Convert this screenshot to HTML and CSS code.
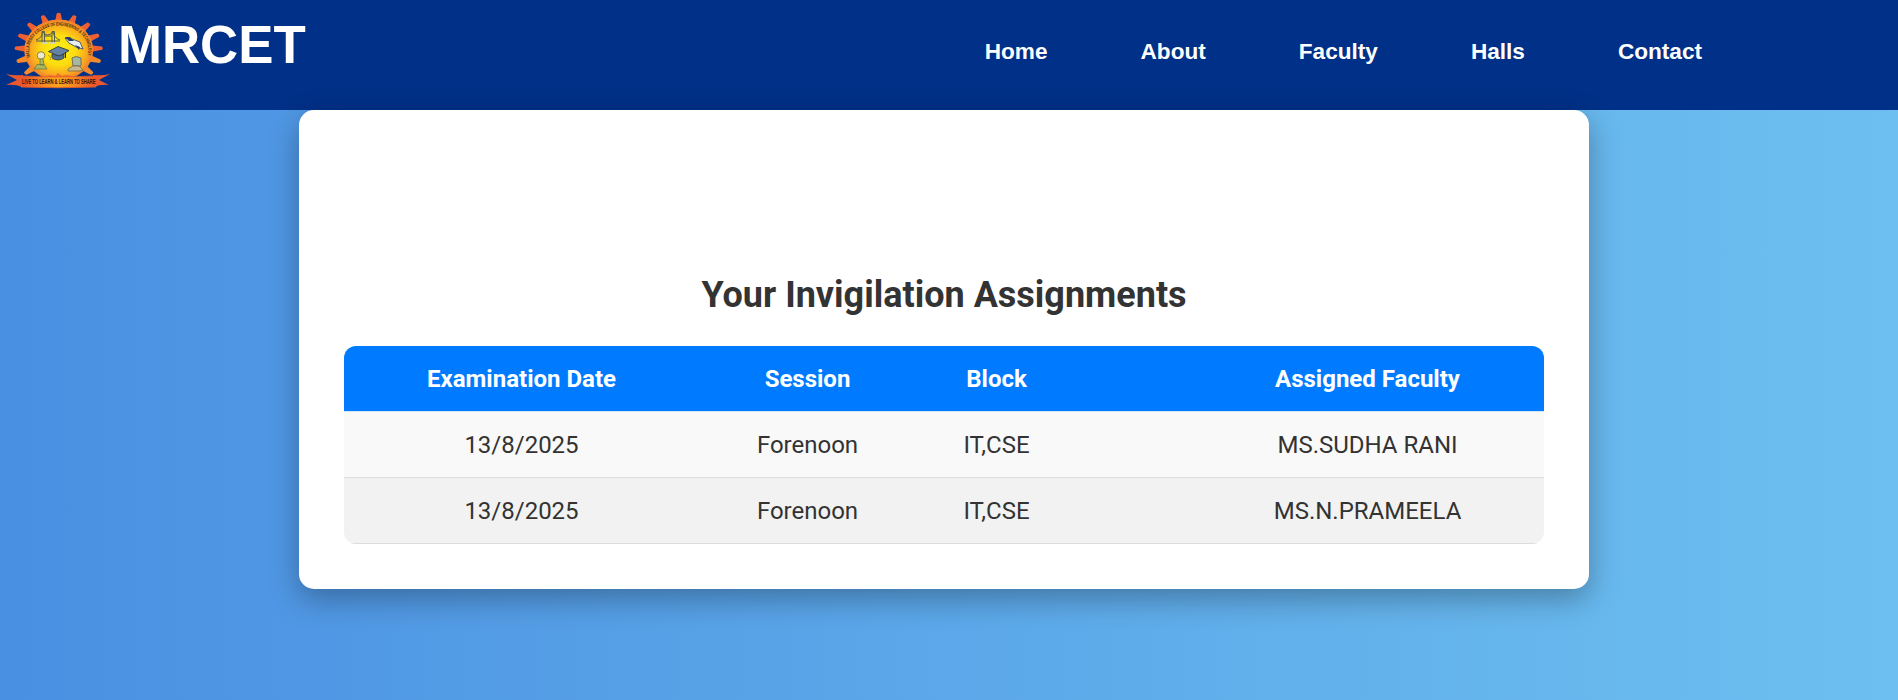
FILE: index.html
```html
<!DOCTYPE html>
<html lang="en">
<head>
<meta charset="utf-8">
<title>MRCET Invigilation</title>
<link rel="stylesheet" href="styles.css">
</head>
<body>
<header class="header">
  <div class="brand">
    <svg class="logo" width="106" height="78" viewBox="0 0 106 78">
      <defs>
        <radialGradient id="sun"><stop offset="0" stop-color="#fff01a"/><stop offset=".5" stop-color="#fcdc0f"/><stop offset=".82" stop-color="#f9a81f"/><stop offset="1" stop-color="#f0802c"/></radialGradient>
        <linearGradient id="band" x1="0" x2="1" y1="0" y2="0"><stop offset="0" stop-color="#e9502a"/><stop offset=".3" stop-color="#f58a22"/><stop offset=".5" stop-color="#fba61c"/><stop offset=".7" stop-color="#f58a22"/><stop offset="1" stop-color="#e9502a"/></linearGradient>
        <path id="arc" d="M25.400 44A29.500 24.500 0 1 1 82 44"/>
        <path id="tooth" d="M-4 -32L-2 -43.500Q0 -45 2 -43.500L4 -32Z"/>
      </defs>
      <g transform="translate(53.700 37) scale(1 .84)">
        <g fill="#ee5f33">
          <use href="#tooth"/>
          <use href="#tooth" transform="rotate(21.500)"/><use href="#tooth" transform="rotate(44)"/><use href="#tooth" transform="rotate(66)"/><use href="#tooth" transform="rotate(87)"/>
          <use href="#tooth" transform="rotate(-21.500)"/><use href="#tooth" transform="rotate(-44)"/><use href="#tooth" transform="rotate(-66)"/><use href="#tooth" transform="rotate(-87)"/>
        </g>
        <g fill="#f58a2c">
          <use href="#tooth" transform="rotate(108)"/><use href="#tooth" transform="rotate(130)"/>
          <use href="#tooth" transform="rotate(-108)"/><use href="#tooth" transform="rotate(-130)"/>
        </g>
      </g>
      <ellipse cx="53.700" cy="37" rx="34.500" ry="30.500" fill="url(#sun)"/>
      <path d="M36 66Q43 60 50 63L53 60L57 63Q65 60 71 66Z" fill="#ef7328"/>
      <text class="ring"><textPath href="#arc" textLength="97" lengthAdjust="spacingAndGlyphs">MALLA REDDY COLLEGE OF ENGINEERING &amp; TECHNOLOGY</textPath></text>
      <g fill="none" stroke="#56604b" stroke-width="1">
        <path d="M31 28H55M31 27Q37 25 38 19Q42 25 48 19Q49 25 55 27M37 30V18.500H39.500V30M47 30V18.500H49.500V30M39 23H47"/>
        <path d="M36 30h6M44 30h7" stroke="#cfd7ca" stroke-width="1.500"/>
      </g>
      <path d="M60 25l7 1 8 3 3 7-7-2-7-4z" fill="#e8edf0" stroke="#253a66" stroke-width=".8"/>
      <path d="M60 24l5 0 4 4-5 0zM70 32l4 5 1-3z" fill="#263b65"/>
      <path d="M43.500 38.500l9.500-5 11 4-9.500 6z" fill="#6582a5" stroke="#222d35" stroke-width=".8"/>
      <path d="M47 41v4q6 4 12 0v-4l-5 2z" fill="#54708f" stroke="#222d35" stroke-width=".7"/>
      <path d="M60.500 39v6" stroke="#222d35"/>
      <circle cx="36" cy="42.500" r="3.800" fill="#efeacb" stroke="#78642f" stroke-width=".8"/>
      <path d="M35 46h3l1 6h-4zM29 56l3-4.500h7l3 4.500z" fill="#a8b85d" stroke="#64703b" stroke-width=".7"/>
      <path d="M43 42q4 2 2 5M46 42l2 5" fill="none" stroke="#a28620" stroke-width=".7"/>
      <path d="M67 45q4-3 9 0v8h-8z" fill="#a6b8a1" stroke="#636a57" stroke-width=".9"/>
      <path d="M63 56l5-3h6l4 4-3 1H63z" fill="#c9b98a" stroke="#6c6042" stroke-width=".7"/>
      <path d="M1 61Q9 63 18 62V74Q9 71 1 72L12 67Z" fill="#ea5830"/>
      <path d="M105 61Q97 63 88 62V74Q97 71 104 72L94 67Z" fill="#ea5830"/>
      <path d="M16 63Q53 65 91 63V74Q53 75.500 16 74Z" fill="url(#band)" stroke="#e95b2b" stroke-width=".8"/>
      <text class="motto" x="17" y="71.300" textLength="73.500" lengthAdjust="spacingAndGlyphs">LIVE TO LEARN &amp; LEARN TO SHARE</text>
    </svg>
    <span class="brand-name">MRCET</span>
  </div>
  <nav class="nav"><a>Home</a><a>About</a><a>Faculty</a><a>Halls</a><a>Contact</a></nav>
</header>
<main class="card">
  <h1 class="title">Your Invigilation Assignments</h1>
  <table class="table">
    <colgroup><col class="col-date"><col class="col-session"><col class="col-block"><col class="col-gap"><col class="col-faculty"></colgroup>
    <thead><tr><th>Examination Date</th><th>Session</th><th>Block</th><th></th><th>Assigned Faculty</th></tr></thead>
    <tbody>
      <tr><td>13/8/2025</td><td>Forenoon</td><td>IT,CSE</td><td></td><td>MS.SUDHA RANI</td></tr>
      <tr><td>13/8/2025</td><td>Forenoon</td><td>IT,CSE</td><td></td><td>MS.N.PRAMEELA</td></tr>
    </tbody>
  </table>
</main>
</body>
</html>
```
FILE: styles.css
```css
* { box-sizing: border-box; }
body {
  margin: 0;
  min-height: 700px;
  overflow: hidden;
  color: #333;
  font-family: Roboto, sans-serif;
  background: linear-gradient(to right, #4a90e2, #6dbff0);
}
.header {
  display: flex;
  justify-content: space-between;
  height: 110px;
  padding-right: 196px;
  color: #fff;
  background: #003087;
  font-family: "Liberation Sans", Arial, sans-serif;
  font-weight: bold;
}
.brand { display: flex; padding: 13px 0 0 5px; gap: 7px; }
.logo { overflow: visible; }
.brand-name { font-size: 52.8px; line-height: 64px; }
.ring { font: 700 4.800px "Liberation Sans", sans-serif; fill: #4b2810; }
.motto { font: 700 7.200px "Liberation Sans", sans-serif; fill: #351509; }
.nav { display: flex; gap: 93px; padding-top: 38px; font-size: 22.6px; line-height: 28px; }
.card {
  width: 1290px;
  height: 479px;
  margin-left: 299px;
  padding: 163px 45px 45px;
  border-radius: 15px;
  background: #fff;
  box-shadow: 0 10px 30px rgba(0, 0, 0, .3);
}
.title { margin: 0 0 29px; font-size: 36px; line-height: 44px; text-align: center; }
.table {
  width: 1200px;
  table-layout: fixed;
  border-collapse: separate;
  border-spacing: 0;
  border-radius: 12px;
  overflow: hidden;
  font-size: 24px;
  line-height: 28px;
  text-align: center;
}
.col-date { width: 355px; }
.col-session { width: 217px; }
.col-block { width: 161px; }
.col-gap { width: 114px; }
.col-faculty { width: 353px; }
th, td { padding: 0; }
th { height: 66px; color: #fff; background: #007bff; border-bottom: 1px solid #d5e7f5; }
td { height: 66px; border-bottom: 1px solid #ddd; background: #f9f9f9; }
tbody tr:nth-child(even) td { background: #f2f2f2; }
```
